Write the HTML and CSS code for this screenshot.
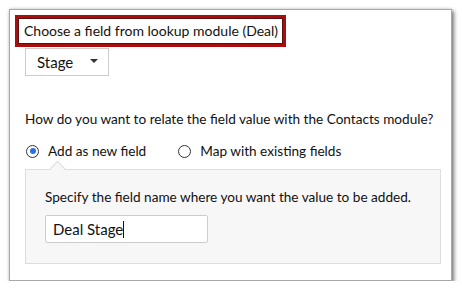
FILE: index.html
```html
<!DOCTYPE html>
<html>
	<head>
		<title>Lookup field</title>
		<link rel="stylesheet" href="styles.css">
	</head>
	<body>
		<div class="card">
			<div class="highlight">Choose a field from lookup module (Deal)</div>
			<div class="select">
				<span>Stage</span>
				<span class="caret"></span>
			</div>
			<div class="question">How do you want to relate the field value with the Contacts module?</div>
			<div class="radios">
				<label class="radio"><span class="dot on"></span>Add as new field</label>
				<label class="radio"><span class="dot"></span>Map with existing fields</label>
			</div>
			<div class="panel">
				<div class="hint">Specify the field name where you want the value to be added.</div>
				<div class="input">Deal Stage<span class="cursor"></span></div>
			</div>
		</div>
	</body>
</html>
```
FILE: styles.css
```css
body {
	margin: 0;
	background: #ffffff;
	font-family: Lato, sans-serif;
	font-size: 13.6px;
	color: #111111;
}

.card {
	margin: 9px 0 0 9px;
	width: 443px;
	height: 272px;
	box-sizing: border-box;
	border: 1px solid #a9a9a9;
	background: #ffffff;
	box-shadow: 2px 2px 4px rgba(0, 0, 0, 0.5), 0 0 3px rgba(0, 0, 0, 0.15);
	padding: 5px 0 0 5px;
}

.highlight {
	display: inline-block;
	border: 3px solid #a80e0e;
	outline: 1px solid #5a1010;
	outline-offset: -4px;
	padding: 5px 5px 5px 6px;
	line-height: 16px;
	font-size: 14px;
	color: #111111;
}

.select {
	margin: 1px 0 0 10px;
	width: 84px;
	height: 28px;
	box-sizing: border-box;
	border: 1px solid #cccccc;
	display: flex;
	align-items: center;
	justify-content: space-between;
	padding: 0 10px 0 11px;
	font-size: 15px;
}

.caret {
	width: 0;
	height: 0;
	border-left: 4px solid transparent;
	border-right: 4px solid transparent;
	border-top: 4px solid #333333;
	margin-top: -2px;
}

.question {
	margin: 34px 0 0 10px;
	line-height: 18px;
}

.radios {
	display: flex;
	gap: 32px;
	margin: 14px 0 0 11px;
	line-height: 18px;
}

.radio {
	display: flex;
	align-items: center;
	gap: 9px;
}

.dot {
	width: 13px;
	height: 13px;
	border: 1px solid #333333;
	border-radius: 50%;
	box-sizing: border-box;
	display: flex;
	align-items: center;
	justify-content: center;
}

.dot.on::after {
	content: "";
	width: 6px;
	height: 6px;
	border-radius: 50%;
	background: #2f6fe0;
}

.panel {
	position: relative;
	margin: 9px 0 0 10px;
	width: 416px;
	height: 95px;
	box-sizing: border-box;
	background: #f7f7f7;
	border: 1px solid #dddddd;
	padding: 18px 0 0 19px;
}

.panel::before {
	content: "";
	position: absolute;
	top: -7px;
	left: 26px;
	width: 10px;
	height: 10px;
	background: #f7f7f7;
	border-left: 1px solid #dddddd;
	border-top: 1px solid #dddddd;
	transform: rotate(45deg);
}

.hint {
	line-height: 18px;
}

.input {
	margin-top: 9px;
	width: 163px;
	height: 28px;
	box-sizing: border-box;
	background: #ffffff;
	border: 1px solid #cccccc;
	border-radius: 2px;
	display: flex;
	align-items: center;
	padding-left: 7px;
	font-size: 15px;
}

.cursor {
	width: 1px;
	height: 17px;
	background: #111111;
}
```
